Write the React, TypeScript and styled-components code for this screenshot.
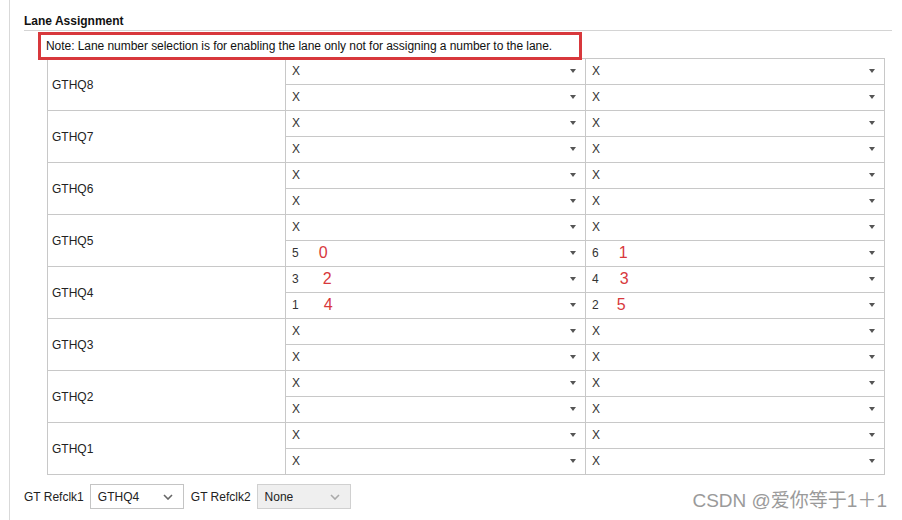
import React from "react";
import styled, { createGlobalStyle } from "styled-components";

const Global = createGlobalStyle`
  body {
    margin: 0;
    background: #ffffff;
    font-family: "Liberation Sans", Arial, sans-serif;
    font-size: 12px;
    color: #222;
  }
`;

const Page = styled.div`
  position: relative;
  width: 902px;
  height: 520px;
  padding-left: 9px;
  box-sizing: border-box;
  overflow: hidden;
`;

const Panel = styled.div`
  height: 100%;
  border-left: 1px solid #d9d9d9;
  padding: 14px 10px 0 14px;
  box-sizing: border-box;
`;

const Heading = styled.div`
  font-weight: bold;
  font-size: 12px;
  line-height: 14px;
  padding-bottom: 2px;
  border-bottom: 1px solid #d4d4d4;
  color: #111;
`;

const Note = styled.div`
  position: relative;
  z-index: 1;
  margin: 1px 0 -2px 14px;
  width: 544px;
  height: 28px;
  box-sizing: border-box;
  border: 3px solid #d8383c;
  padding-left: 5px;
  display: flex;
  align-items: center;
  font-size: 12px;
  letter-spacing: -0.05px;
  color: #111;
`;

const Table = styled.div`
  margin-left: 23px;
  width: 838px;
  display: grid;
  grid-template-columns: 238px 300px 1fr;
  grid-auto-rows: 26px;
  border-top: 1px solid #c8c8c8;
  border-left: 1px solid #c8c8c8;
  box-sizing: border-box;
`;

const Label = styled.div`
  grid-row: span 2;
  display: flex;
  align-items: center;
  padding-left: 4px;
  border-right: 1px solid #c8c8c8;
  border-bottom: 1px solid #c8c8c8;
  color: #222;
`;

const Cell = styled.div`
  display: flex;
  align-items: center;
  padding: 0 9px 1px 6px;
  border-right: 1px solid #c8c8c8;
  border-bottom: 1px solid #c8c8c8;
  color: #333;
`;

const Value = styled.span`
  flex: 1;
  display: flex;
  align-items: center;
`;

const Mark = styled.span<{ $gap: number }>`
  margin-left: ${(p) => p.$gap}px;
  color: #d8383c;
  font-size: 16px;
  line-height: 16px;
`;

const Caret = styled.span`
  width: 0;
  height: 0;
  border-left: 3.5px solid transparent;
  border-right: 3.5px solid transparent;
  border-top: 4px solid #555;
`;

const Footer = styled.div`
  display: flex;
  align-items: center;
  gap: 6px;
  margin-top: 9px;
`;

const FooterLabel = styled.span`
  color: #222;
`;

const Select = styled.div<{ $disabled?: boolean }>`
  width: 94px;
  height: 25px;
  margin-right: 1px;
  box-sizing: border-box;
  border: 1px solid ${(p) => (p.$disabled ? "#d0d0d0" : "#c4c4c4")};
  background: ${(p) => (p.$disabled ? "#efefef" : "#fff")};
  display: flex;
  align-items: center;
  justify-content: space-between;
  padding: 0 10px 0 7px;
  color: #222;
`;

const Watermark = styled.div`
  position: absolute;
  right: 15px;
  bottom: 8px;
  font-family: "Liberation Sans", "Noto Sans CJK SC", sans-serif;
  font-size: 19px;
  color: #9a9a9a;
  text-shadow: 1px 1px 0 #fff;
`;

type Slot = { v: string; mark?: string; gap?: number };

const X: Slot = { v: "X" };

const quads: { name: string; rows: [Slot, Slot][] }[] = [
  { name: "GTHQ8", rows: [[X, X], [X, X]] },
  { name: "GTHQ7", rows: [[X, X], [X, X]] },
  { name: "GTHQ6", rows: [[X, X], [X, X]] },
  {
    name: "GTHQ5",
    rows: [
      [X, X],
      [
        { v: "5", mark: "0", gap: 20 },
        { v: "6", mark: "1", gap: 20 },
      ],
    ],
  },
  {
    name: "GTHQ4",
    rows: [
      [
        { v: "3", mark: "2", gap: 24 },
        { v: "4", mark: "3", gap: 21 },
      ],
      [
        { v: "1", mark: "4", gap: 25 },
        { v: "2", mark: "5", gap: 18 },
      ],
    ],
  },
  { name: "GTHQ3", rows: [[X, X], [X, X]] },
  { name: "GTHQ2", rows: [[X, X], [X, X]] },
  { name: "GTHQ1", rows: [[X, X], [X, X]] },
];

const Chevron = ({ color }: { color: string }) => (
  <svg width="10" height="6" viewBox="0 0 10 6">
    <path d="M1 1 L5 5 L9 1" fill="none" stroke={color} strokeWidth="1.6" />
  </svg>
);

const LaneCell = ({ slot }: { slot: Slot }) => (
  <Cell>
    <Value>
      {slot.v}
      {slot.mark && <Mark $gap={slot.gap ?? 20}>{slot.mark}</Mark>}
    </Value>
    <Caret />
  </Cell>
);

export default function App() {
  return (
    <Page>
      <Global />
      <Panel>
        <Heading>Lane Assignment</Heading>
        <Note>Note: Lane number selection is for enabling the lane only not for assigning a number to the lane.</Note>
        <Table>
          {quads.map((q) => (
            <React.Fragment key={q.name}>
              <Label>{q.name}</Label>
              <LaneCell slot={q.rows[0][0]} />
              <LaneCell slot={q.rows[0][1]} />
              <LaneCell slot={q.rows[1][0]} />
              <LaneCell slot={q.rows[1][1]} />
            </React.Fragment>
          ))}
        </Table>
        <Footer>
          <FooterLabel>GT Refclk1</FooterLabel>
          <Select>
            GTHQ4
            <Chevron color="#666" />
          </Select>
          <FooterLabel>GT Refclk2</FooterLabel>
          <Select $disabled>
            None
            <Chevron color="#aaa" />
          </Select>
        </Footer>
      </Panel>
      <Watermark>CSDN @爱你等于1＋1</Watermark>
    </Page>
  );
}
